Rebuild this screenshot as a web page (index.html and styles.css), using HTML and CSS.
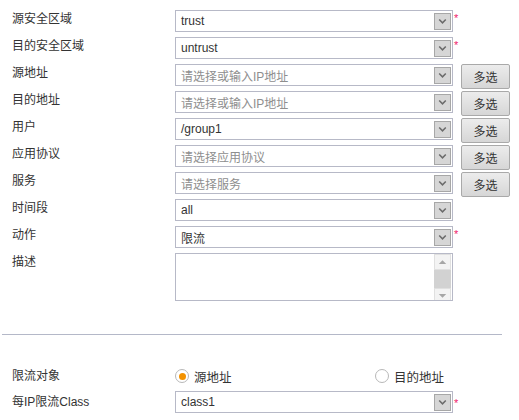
FILE: index.html
```html
<!DOCTYPE html>
<html>
<head>
<meta charset="utf-8">
<link rel="stylesheet" href="styles.css">
</head>
<body>
<div class="form">
  <div class="row">
    <div class="lbl">源安全区域</div>
    <div class="select"><span class="val">trust</span><span class="arrow"><svg width="16" height="16" viewBox="0 0 16 16"><polyline points="4.5,6.5 8,10 11.5,6.5" fill="none" stroke="#6a6a6a" stroke-width="1.6"/></svg></span></div>
    <span class="req">*</span>
  </div>
  <div class="row">
    <div class="lbl">目的安全区域</div>
    <div class="select"><span class="val">untrust</span><span class="arrow"><svg width="16" height="16" viewBox="0 0 16 16"><polyline points="4.5,6.5 8,10 11.5,6.5" fill="none" stroke="#6a6a6a" stroke-width="1.6"/></svg></span></div>
    <span class="req">*</span>
  </div>
  <div class="row">
    <div class="lbl">源地址</div>
    <div class="select"><span class="ph">请选择或输入IP地址</span><span class="arrow"><svg width="16" height="16" viewBox="0 0 16 16"><polyline points="4.5,6.5 8,10 11.5,6.5" fill="none" stroke="#6a6a6a" stroke-width="1.6"/></svg></span></div>
    <button class="multi">多选</button>
  </div>
  <div class="row">
    <div class="lbl">目的地址</div>
    <div class="select"><span class="ph">请选择或输入IP地址</span><span class="arrow"><svg width="16" height="16" viewBox="0 0 16 16"><polyline points="4.5,6.5 8,10 11.5,6.5" fill="none" stroke="#6a6a6a" stroke-width="1.6"/></svg></span></div>
    <button class="multi">多选</button>
  </div>
  <div class="row">
    <div class="lbl">用户</div>
    <div class="select"><span class="val">/group1</span><span class="arrow"><svg width="16" height="16" viewBox="0 0 16 16"><polyline points="4.5,6.5 8,10 11.5,6.5" fill="none" stroke="#6a6a6a" stroke-width="1.6"/></svg></span></div>
    <button class="multi">多选</button>
  </div>
  <div class="row">
    <div class="lbl">应用协议</div>
    <div class="select"><span class="ph">请选择应用协议</span><span class="arrow"><svg width="16" height="16" viewBox="0 0 16 16"><polyline points="4.5,6.5 8,10 11.5,6.5" fill="none" stroke="#6a6a6a" stroke-width="1.6"/></svg></span></div>
    <button class="multi">多选</button>
  </div>
  <div class="row">
    <div class="lbl">服务</div>
    <div class="select"><span class="ph">请选择服务</span><span class="arrow"><svg width="16" height="16" viewBox="0 0 16 16"><polyline points="4.5,6.5 8,10 11.5,6.5" fill="none" stroke="#6a6a6a" stroke-width="1.6"/></svg></span></div>
    <button class="multi">多选</button>
  </div>
  <div class="row">
    <div class="lbl">时间段</div>
    <div class="select"><span class="val">all</span><span class="arrow"><svg width="16" height="16" viewBox="0 0 16 16"><polyline points="4.5,6.5 8,10 11.5,6.5" fill="none" stroke="#6a6a6a" stroke-width="1.6"/></svg></span></div>
  </div>
  <div class="row">
    <div class="lbl">动作</div>
    <div class="select"><span class="val">限流</span><span class="arrow"><svg width="16" height="16" viewBox="0 0 16 16"><polyline points="4.5,6.5 8,10 11.5,6.5" fill="none" stroke="#6a6a6a" stroke-width="1.6"/></svg></span></div>
    <span class="req">*</span>
  </div>
  <div class="row row-area">
    <div class="lbl">描述</div>
    <div class="area">
      <div class="area-text"></div>
      <div class="scroll">
        <div class="sbtn"><svg width="16" height="16" viewBox="0 0 16 16"><polygon points="4,10 12,10 8,6" fill="#a6a6a6"/></svg></div>
        <div class="thumb"></div>
        <div class="sbtn sbtn-down"><svg width="16" height="12" viewBox="0 0 16 12"><polygon points="4,5 12,5 8,9" fill="#a6a6a6"/></svg></div>
      </div>
    </div>
  </div>
</div>
<div class="sep"></div>
<div class="form form2">
  <div class="row row-c">
    <div class="lbl">限流对象</div>
    <div class="radios">
      <label class="opt"><span class="radio on"></span>源地址</label>
      <label class="opt"><span class="radio"></span>目的地址</label>
    </div>
  </div>
  <div class="row row-c">
    <div class="lbl">每IP限流Class</div>
    <div class="select"><span class="val">class1</span><span class="arrow"><svg width="16" height="16" viewBox="0 0 16 16"><polyline points="4.5,6.5 8,10 11.5,6.5" fill="none" stroke="#6a6a6a" stroke-width="1.6"/></svg></span></div>
    <span class="req">*</span>
  </div>
</div>
</body>
</html>
```

FILE: styles.css
```css
* { box-sizing: border-box; }
html, body { margin: 0; padding: 0; background: #fff; }
body {
  font-family: "Liberation Sans", "Noto Sans CJK SC", sans-serif;
  font-size: 12px;
  color: #333;
}
.form {
  padding: 10px 0 0 12px;
  display: flex;
  flex-direction: column;
  gap: 5px;
}
.row {
  display: flex;
  align-items: flex-start;
  height: 22px;
}
.lbl {
  width: 163px;
  line-height: 16px;
  padding-top: 1px;
  flex: none;
}
.select {
  width: 278px;
  height: 22px;
  border: 1px solid #b7b9c7;
  display: flex;
  align-items: center;
  padding-left: 5px;
  background: #fff;
  flex: none;
}
.val { color: #333; }
.ph { color: #8e8e8e; }
.arrow {
  margin-left: auto;
  margin-right: 1px;
  width: 17px;
  height: 17px;
  border: 1px solid #a7a7a7;
  background: #d6d6d6;
  display: flex;
  align-items: center;
  justify-content: center;
}
.arrow svg { display: block; }
.req {
  color: #f0186a;
  font-size: 11px;
  line-height: 11px;
  padding-top: 3px;
  margin-left: 1px;
}
.multi {
  margin: 0 0 0 8px;
  width: 49px;
  height: 25px;
  border: 1px solid #a9a9a9;
  border-radius: 2px;
  background: linear-gradient(#ececec, #d6d6d6);
  font-family: "Liberation Sans", "Noto Sans CJK SC", sans-serif;
  font-size: 12px;
  color: #333;
  padding: 0;
  flex: none;
}
.row-area { height: 48px; }
.area {
  width: 278px;
  height: 48px;
  border: 1px solid #b7b9c7;
  display: flex;
  flex: none;
  overflow: hidden;
}
.area-text { flex: 1; }
.scroll {
  width: 17px;
  margin-right: 1px;
  display: flex;
  flex-direction: column;
  background: #e8e8e8;
}
.sbtn {
  height: 16px;
  background: #f3f3f3;
  border: 1px solid #e0e0e0;
  display: flex;
  align-items: center;
  justify-content: center;
}
.sbtn svg { display: block; }
.thumb {
  height: 18px;
  background: #d2d2d2;
}
.sbtn-down { height: 12px; border-bottom: none; }
.sep {
  margin: 33px 0 0 2px;
  width: 500px;
  height: 1px;
  background: #b4b8c8;
}
.form2 {
  padding-top: 30px;
  gap: 4px;
}
.row-c { align-items: center; }
.row-c .lbl { padding-top: 0; }
.radios { display: flex; }
.opt {
  width: 200px;
  display: flex;
  align-items: center;
  gap: 5px;
  font-size: 12.5px;
}
.opt:last-child { width: auto; }
.radio {
  width: 14px;
  height: 14px;
  border: 1px solid #b8b8b8;
  border-radius: 50%;
  background: #fff;
  display: flex;
  align-items: center;
  justify-content: center;
}
.radio.on::after {
  content: "";
  width: 7px;
  height: 7px;
  border-radius: 50%;
  background: #f39200;
}
```
